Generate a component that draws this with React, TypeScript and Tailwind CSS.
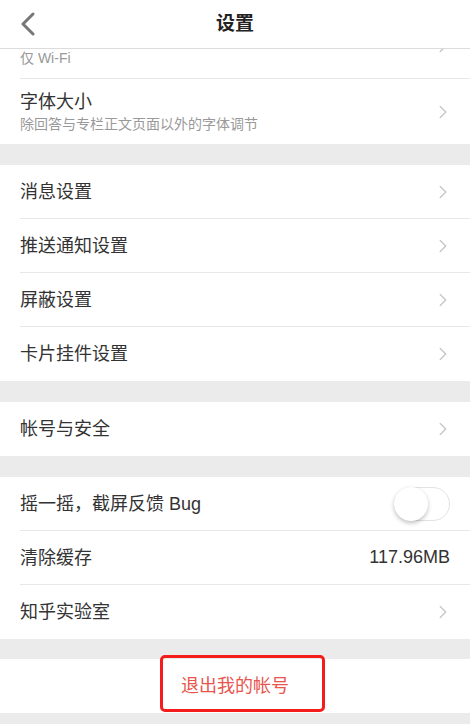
import { ChevronRight } from "lucide-react"

type Row = {
  title?: string
  sub?: string
  value?: string
  toggle?: boolean
  arrow?: boolean
}

// the list is scrolled a little, so the first row's title sits under the nav bar
const sections: Row[][] = [
  [
    { sub: "仅 Wi-Fi", arrow: true },
    { title: "字体大小", sub: "除回答与专栏正文页面以外的字体调节", arrow: true },
  ],
  [
    { title: "消息设置", arrow: true },
    { title: "推送通知设置", arrow: true },
    { title: "屏蔽设置", arrow: true },
    { title: "卡片挂件设置", arrow: true },
  ],
  [{ title: "帐号与安全", arrow: true }],
  [
    { title: "摇一摇，截屏反馈 Bug", toggle: true },
    { title: "清除缓存", value: "117.96MB" },
    { title: "知乎实验室", arrow: true },
  ],
]

function Switch() {
  return (
    <div className="relative h-[34px] w-[56px] rounded-full border border-[#e3e3e3] bg-white">
      <div className="absolute left-[-1px] top-[-1px] h-[34px] w-[34px] rounded-full bg-white shadow-[0_2px_4px_rgba(0,0,0,0.25)]" />
    </div>
  )
}

function SettingRow({ row, last }: { row: Row; last: boolean }) {
  return (
    <div className="pl-5">
      <div
        className={`flex items-center pr-5 ${row.sub ? "h-[65px]" : "h-[54px]"} ${
          last ? "" : "border-b border-[#e8e8e8]"
        }`}
      >
        <div className="flex-1">
          <div className="h-[22px] text-[18px] leading-[22px] text-[#333]">{row.title}</div>
          {row.sub && <div className="mt-[2px] text-[14px] leading-[18px] text-[#999]">{row.sub}</div>}
        </div>
        {row.arrow && <ChevronRight size={22} strokeWidth={1.6} className="mr-[-4px] text-[#c8c8cc]" />}
        {row.value && <span className="text-[18px] text-[#333]">{row.value}</span>}
        {row.toggle && <Switch />}
      </div>
    </div>
  )
}

export default function App() {
  return (
    <div
      className="flex h-[724px] w-[470px] flex-col overflow-hidden bg-[#ebebeb]"
      style={{ fontFamily: '"Liberation Sans", "Noto Sans CJK SC", sans-serif' }}
    >
      {/* nav bar */}
      <div className="relative z-10 flex h-[49px] shrink-0 items-center justify-center border-b border-[#dcdcdc] bg-white">
        <svg className="absolute left-[20px] top-[12px]" width="16" height="24" viewBox="0 0 16 24">
          <path d="M13 2 L3 12 L13 22" fill="none" stroke="#777" strokeWidth="3" strokeLinecap="round" strokeLinejoin="round" />
        </svg>
        <span className="text-[19px] font-bold text-[#222]">设置</span>
      </div>

      {/* scrolled list */}
      <div className="flex-1 overflow-hidden">
        <div className="-mt-[35px] flex flex-col gap-[21px]">
          {sections.map((rows, i) => (
            <div key={i} className="bg-white">
              {rows.map((row, j) => (
                <SettingRow key={j} row={row} last={j === rows.length - 1} />
              ))}
            </div>
          ))}

          <div className="relative -mt-px bg-white">
            <div className="flex h-[54px] items-center justify-center text-[18px] text-[#e8554e]">退出我的帐号</div>
            <div className="absolute left-[160px] top-[-4px] h-[57px] w-[165px] rounded-[5px] border-[3px] border-[#f51c1c]" />
          </div>
        </div>
      </div>
    </div>
  )
}
